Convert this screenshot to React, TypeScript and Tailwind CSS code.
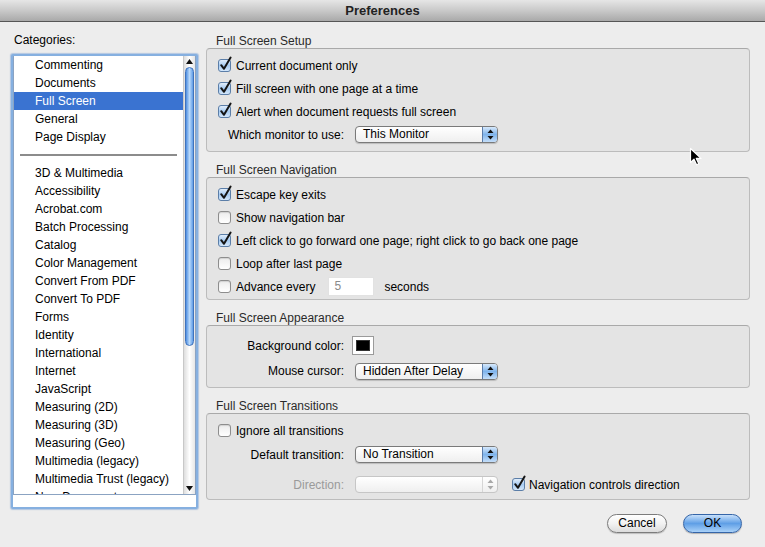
import React from 'react';

// Preferences dialog — Full Screen category (Mac Aqua look)

const categoriesTop = ['Commenting', 'Documents', 'Full Screen', 'General', 'Page Display'];
const categoriesBottom = [
  '3D & Multimedia',
  'Accessibility',
  'Acrobat.com',
  'Batch Processing',
  'Catalog',
  'Color Management',
  'Convert From PDF',
  'Convert To PDF',
  'Forms',
  'Identity',
  'International',
  'Internet',
  'JavaScript',
  'Measuring (2D)',
  'Measuring (3D)',
  'Measuring (Geo)',
  'Multimedia (legacy)',
  'Multimedia Trust (legacy)',
  'New Document',
];

function Check({ checked }: { checked?: boolean }) {
  return (
    <span
      className={`relative inline-block w-[13px] h-[13px] shrink-0 rounded-[3px] border ${
        checked
          ? 'border-[#5b7ea8] bg-linear-to-b from-[#e2eefb] via-[#a6cbf2] to-[#d3e6fa]'
          : 'border-[#8d8d8d] bg-linear-to-b from-[#ececec] to-white shadow-[inset_0_1px_1px_rgba(0,0,0,0.12)]'
      }`}
    >
      {checked && (
        <svg className="absolute -top-[4px] left-[0px]" width="14" height="16" viewBox="0 0 14 16">
          <path d="M2.2 9.2 L5 12.8 L11.6 1.6" fill="none" stroke="#151515" strokeWidth="2" strokeLinecap="round" strokeLinejoin="round" />
        </svg>
      )}
    </span>
  );
}

function CheckRow({ checked, children }: { checked?: boolean; children: React.ReactNode }) {
  return (
    <div className="flex items-center h-[23px] pl-[11px] gap-[5px]">
      <Check checked={checked} />
      <span>{children}</span>
    </div>
  );
}

function Arrows({ disabled }: { disabled?: boolean }) {
  const c = disabled ? '#a9a9a9' : '#111';
  return (
    <svg width="7" height="11" viewBox="0 0 7 11">
      <path d="M3.5 0.5 L6.5 4 L0.5 4 Z" fill={c} />
      <path d="M3.5 10.5 L6.5 7 L0.5 7 Z" fill={c} />
    </svg>
  );
}

function Popup({ label, disabled }: { label?: string; disabled?: boolean }) {
  return (
    <div
      className={`flex h-[17px] w-[143px] rounded-[4px] border overflow-hidden bg-linear-to-b from-white to-[#efefef] ${
        disabled ? 'border-[#c6c6c6]' : 'border-[#7a7a7a] shadow-[0_1px_1px_rgba(0,0,0,0.18)]'
      }`}
    >
      <div className="flex-1 pl-[7px] leading-[15px] text-[12px] text-black">{label}</div>
      <div
        className={`w-[15px] flex items-center justify-center ${
          disabled
            ? 'border-l border-[#d6d6d6]'
            : 'border-l border-[#5a7caa] bg-linear-to-b from-[#d7e9fb] via-[#7fb4ec] to-[#c4def9]'
        }`}
      >
        <Arrows disabled={disabled} />
      </div>
    </div>
  );
}

function Label({ children, disabled }: { children: React.ReactNode; disabled?: boolean }) {
  return <span className={`w-[137px] shrink-0 text-right ${disabled ? 'text-[#9a9a9a]' : ''}`}>{children}</span>;
}

function Section({ title, className, children }: { title: string; className: string; children: React.ReactNode }) {
  return (
    <div className="flex flex-col">
      <div className="h-[14px] leading-[14px] pl-[10px] text-[12px] text-[#2a2a2a]">{title}</div>
      <div className={`rounded-[4px] border border-[#bcbcbc] border-t-[#a9a9a9] bg-[#e4e4e4] ${className}`}>{children}</div>
    </div>
  );
}

export default function App() {
  return (
    <div className="relative w-[765px] h-[547px] overflow-hidden bg-[#ededed] text-[12px] text-black font-['Liberation_Sans',Arial,sans-serif]">
      {/* Title bar */}
      <div className="h-[22px] border-b border-[#565656] bg-linear-to-b from-[#e6e6e6] via-[#c9c9c9] to-[#a9a9a9] flex items-center justify-center">
        <span className="text-[13px] font-bold text-[#222] leading-none">Preferences</span>
      </div>

      <div className="flex">
        {/* Categories */}
        <div className="ml-[11px] w-[187px] pt-[11px] flex flex-col">
          <div className="h-[14px] leading-[14px] pl-[3px] mb-[7px]">Categories:</div>
          <div className="h-[455px] rounded-[2px] border-2 border-[#86b0e0] shadow-[0_0_1px_1px_rgba(120,160,215,0.5)] bg-white flex flex-col">
            <div className="flex h-[439px] border-x border-b border-[#8ba3c2]">
              <div className="flex-1 overflow-hidden">
                {categoriesTop.map((c) => (
                  <div
                    key={c}
                    className={`h-[18px] leading-[18px] pl-[21px] ${c === 'Full Screen' ? 'bg-[#3a73d1] text-white' : ''}`}
                  >
                    {c}
                  </div>
                ))}
                <div className="h-[18px] flex items-center px-[6px]">
                  <div className="h-[2px] w-full bg-[#8c8c8c]" />
                </div>
                {categoriesBottom.map((c) => (
                  <div key={c} className="h-[18px] leading-[18px] pl-[21px]">
                    {c}
                  </div>
                ))}
              </div>
              {/* Scrollbar */}
              <div className="w-[12px] flex flex-col bg-linear-to-r from-[#dedede] via-white to-[#e6e6e6] border-l border-[#c8c8c8]">
                <div className="h-[11px] flex items-center justify-center">
                  <svg width="7" height="5" viewBox="0 0 7 5"><path d="M3.5 0 L7 5 L0 5 Z" fill="#111" /></svg>
                </div>
                <div className="h-[279px] mx-[1px] rounded-full border border-[#3f73bd] bg-linear-to-r from-[#4e8ee0] via-[#b9d9fa] to-[#5f9ce6]" />
                <div className="flex-1" />
                <div className="h-[11px] flex items-center justify-center">
                  <svg width="7" height="5" viewBox="0 0 7 5"><path d="M3.5 5 L7 0 L0 0 Z" fill="#111" /></svg>
                </div>
              </div>
            </div>
            <div className="flex-1 bg-white" />
          </div>
        </div>

        {/* Settings */}
        <div className="ml-[8px] w-[544px] pt-[12px] flex flex-col gap-[11px]">
          <Section title="Full Screen Setup" className="h-[104px] pt-[5px]">
            <CheckRow checked>Current document only</CheckRow>
            <CheckRow checked>Fill screen with one page at a time</CheckRow>
            <CheckRow checked>Alert when document requests full screen</CheckRow>
            <div className="flex items-center h-[23px]">
              <Label>Which monitor to use:</Label>
              <span className="ml-[11px]">
                <Popup label="This Monitor" />
              </span>
            </div>
          </Section>

          <Section title="Full Screen Navigation" className="h-[123px] pt-[5px]">
            <CheckRow checked>Escape key exits</CheckRow>
            <CheckRow>Show navigation bar</CheckRow>
            <CheckRow checked>Left click to go forward one page; right click to go back one page</CheckRow>
            <CheckRow>Loop after last page</CheckRow>
            <div className="flex items-center h-[23px] pl-[11px] gap-[5px]">
              <Check />
              <span>Advance every</span>
              <div className="ml-[8px] w-[46px] h-[19px] bg-white border border-[#e2e2e2] pl-[5px] leading-[17px] text-[#8a8a8a]">5</div>
              <span className="ml-[5px]">seconds</span>
            </div>
          </Section>

          <Section title="Full Screen Appearance" className="h-[63px] pt-[6px]">
            <div className="flex items-center h-[27px]">
              <Label>Background color:</Label>
              <span className="ml-[8px] w-[22px] h-[19px] border border-[#9a9a9a] bg-white p-[3px] flex">
                <span className="flex-1 bg-black border border-[#333]" />
              </span>
            </div>
            <div className="flex items-center h-[24px]">
              <Label>Mouse cursor:</Label>
              <span className="ml-[11px]">
                <Popup label="Hidden After Delay" />
              </span>
            </div>
          </Section>

          <Section title="Full Screen Transitions" className="h-[87px] pt-[5px]">
            <CheckRow>Ignore all transitions</CheckRow>
            <div className="flex items-center h-[25px]">
              <Label>Default transition:</Label>
              <span className="ml-[11px]">
                <Popup label="No Transition" />
              </span>
            </div>
            <div className="flex items-center h-[30px] pt-[5px]">
              <Label disabled>Direction:</Label>
              <span className="ml-[11px]">
                <Popup disabled />
              </span>
              <span className="ml-[14px] flex items-center gap-[4px]">
                <Check checked />
                <span>Navigation controls direction</span>
              </span>
            </div>
          </Section>

          <div className="flex justify-end gap-[16px] pr-[8px] mt-[3px]">
            <button className="w-[60px] h-[19px] rounded-full border border-[#7c7c7c] bg-linear-to-b from-white via-[#f2f2f2] to-[#dcdcdc] text-[12px] leading-[17px] shadow-[0_1px_1px_rgba(0,0,0,0.2)]">
              Cancel
            </button>
            <button className="w-[59px] h-[19px] rounded-full border border-[#3565a8] bg-linear-to-b from-[#c7e0fa] via-[#5f9fe6] to-[#a9d1f8] text-[12px] leading-[17px] shadow-[0_1px_1px_rgba(0,0,0,0.25)]">
              OK
            </button>
          </div>
        </div>
      </div>

      {/* Mouse pointer */}
      <svg className="absolute left-[689px] top-[147px]" width="13" height="19" viewBox="0 0 13 19">
        <path d="M1.5 1.5 L1.5 15.5 L5 12.2 L7.6 17.8 L9.8 16.8 L7.3 11.4 L12 11.4 Z" fill="#000" stroke="#fff" strokeWidth="1.2" strokeLinejoin="round" />
      </svg>
    </div>
  );
}
